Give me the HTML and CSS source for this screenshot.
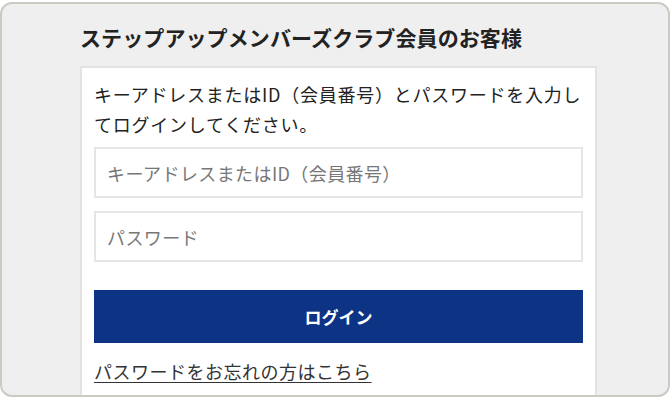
FILE: index.html
```html
<!DOCTYPE html>
<html lang="ja">
<head>
<meta charset="utf-8">
<link rel="stylesheet" href="styles.css">
</head>
<body>
<div class="frame">
  <h2 class="title">ステップアップメンバーズクラブ会員のお客様</h2>
  <div class="card">
    <p class="lead">キーアドレスまたはID（会員番号）とパスワードを入力してログインしてください。</p>
    <div class="field"><span class="ph">キーアドレスまたはID（会員番号）</span></div>
    <div class="field"><span class="ph">パスワード</span></div>
    <div class="btn">ログイン</div>
    <a class="link" href="#">パスワードをお忘れの方はこちら</a>
  </div>
</div>
</body>
</html>
```
FILE: styles.css
```css
html, body {
  margin: 0;
  padding: 0;
  background: #fff;
}
body {
  height: 411px;
  font-family: "Noto Sans CJK JP", "Noto Sans", sans-serif;
  color: #222;
}
.frame {
  margin-top: 2px;
  height: 395px;
  box-sizing: border-box;
  border: 2px solid #cbcbc4;
  border-radius: 12px;
  background: #efefef;
  overflow: hidden;
  padding: 0 71px 0 78px;
}
.title {
  margin: 0;
  padding-top: 18px;
  height: 62px;
  box-sizing: border-box;
  font-size: 21px;
  font-weight: 700;
  line-height: 30px;
  letter-spacing: 0.1px;
}
.card {
  background: #fff;
  border: 2px solid #e2e2e2;
  border-bottom: none;
  padding: 11px 12px 30px;
  height: 400px;
  box-sizing: border-box;
}
.lead {
  margin: 0 0 8px;
  font-size: 18px;
  line-height: 30px;
  letter-spacing: 0.75px;
}
.field {
  height: 51px;
  box-sizing: border-box;
  border: 2px solid #e6e6e6;
  margin-bottom: 13px;
  display: flex;
  align-items: center;
  padding-left: 11px;
}
.ph {
  color: #777;
  font-size: 18px;
  letter-spacing: 0.4px;
}
.btn {
  margin-top: 28px;
  height: 53px;
  background: #0d3384;
  color: #fff;
  font-weight: 700;
  font-size: 17px;
  display: flex;
  align-items: center;
  justify-content: center;
}
.link {
  display: inline-block;
  margin-top: 15px;
  color: #333;
  font-size: 18px;
  line-height: 26px;
  letter-spacing: 0.5px;
  text-decoration: underline;
  text-underline-offset: 3px;
}
```
